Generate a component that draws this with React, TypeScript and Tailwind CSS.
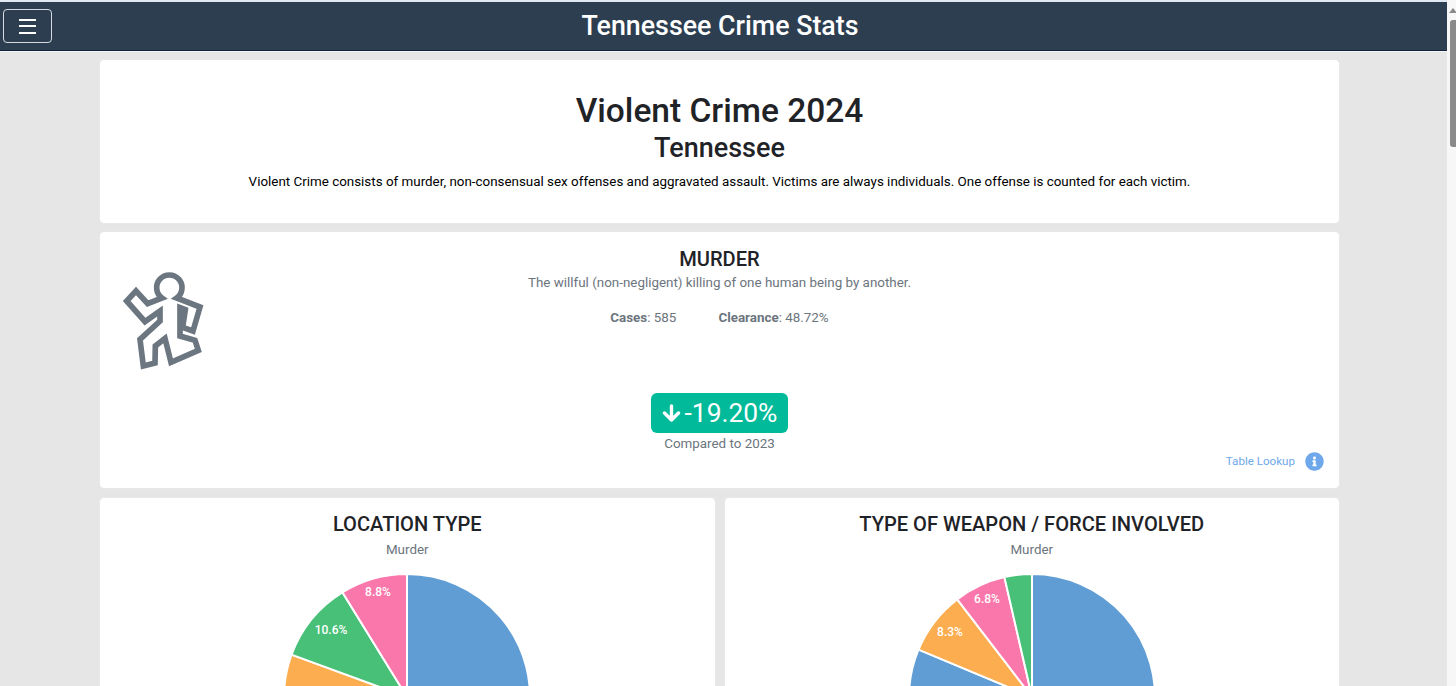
import { FaInfoCircle } from "react-icons/fa";

const BLUE = "#5f9dd4";
const ORANGE = "#fbad50";
const GREEN = "#48c078";
const PINK = "#f977ab";

type Slice = { color: string; pct: number };

const CX = 125;
const CY = 125;
const R = 123;

// Slices run clockwise from 12 o'clock
function slicePath(startPct: number, pct: number) {
  const a0 = (startPct / 100) * Math.PI * 2;
  const a1 = ((startPct + pct) / 100) * Math.PI * 2;
  const x0 = CX + R * Math.sin(a0);
  const y0 = CY - R * Math.cos(a0);
  const x1 = CX + R * Math.sin(a1);
  const y1 = CY - R * Math.cos(a1);
  return `M${CX} ${CY}L${x0} ${y0}A${R} ${R} 0 ${pct > 50 ? 1 : 0} 1 ${x1} ${y1}Z`;
}

function Pie({ slices, labels }: { slices: Slice[]; labels: { x: number; y: number; text: string }[] }) {
  let acc = 0;
  return (
    <svg width="250" height="250" viewBox="0 0 250 250" className="mx-auto mt-[12px] block shrink-0">
      {slices.map((s, i) => {
        const d = slicePath(acc, s.pct);
        acc += s.pct;
        return <path key={i} d={d} fill={s.color} stroke="#fff" strokeWidth="2" />;
      })}
      {labels.map((l) => (
        <text key={l.text} x={l.x} y={l.y} fill="#fff" fontSize="12" fontWeight="500" textAnchor="middle" fontFamily="Roboto, sans-serif">
          {l.text}
        </text>
      ))}
    </svg>
  );
}

const card = "rounded-[5px] border border-[#e8e8e8] bg-white";

export default function App() {
  return (
    <div className="flex h-[686px] overflow-hidden bg-[#e6e6e6] font-['Roboto',sans-serif]">
      <div className="w-[1447px] shrink-0">
        {/* Navbar */}
        <div className="h-[2px] bg-[#dfe8f0]" />
        <header className="grid h-[49px] grid-cols-[1fr_auto_1fr] items-center border-b-[1px] border-[#12263f] bg-[#2c3e50] pr-2 pl-[3px] pt-[1px] shadow-[0_1px_0_#f4f4f4]">
          <button className="mt-[-1px] flex h-[34px] w-[49px] flex-col items-center justify-center gap-[4.5px] rounded-[4px] border border-[#d5dbe0]">
            <span className="h-[2px] w-[17px] bg-white" />
            <span className="h-[2px] w-[17px] bg-white" />
            <span className="h-[2px] w-[17px] bg-white" />
          </button>
          <h1 className="mr-[2px] text-[26.8px] font-medium text-white">Tennessee Crime Stats</h1>
          <div />
        </header>

        <main className="ml-[99px] flex w-[1241px] flex-col gap-[7px] pt-[8px]">
          {/* Heading card */}
          <section className={`${card} flex h-[165px] flex-col items-center pt-[29px] text-[#1f2327]`}>
            <h2 className="text-[33.5px] leading-[43px] font-medium">Violent Crime 2024</h2>
            <h3 className="text-[27px] leading-[32px] font-medium">Tennessee</h3>
            <p className="mt-[7px] text-[13.4px] leading-[21px] text-black">
              Violent Crime consists of murder, non-consensual sex offenses and aggravated assault. Victims are always individuals. One offense is counted for each victim.
            </p>
          </section>

          {/* Murder card */}
          <section className={`${card} relative flex h-[258px] flex-col items-center pt-[15px] text-[#6c757d]`}>
            <svg width="130" height="130" viewBox="0 0 390 390" className="absolute top-[19px] left-0" fill="none" stroke="#6b7680" strokeWidth="17" strokeLinejoin="miter">
              <path d="M186 141 A38 38 0 1 1 230 141 L300 168 L279 240 L248 229 L256 176 L240 170 L240 255 L285 268 L295 298 L213 334 L195 262 L166 285 L165 336 L130 345 L120 265 L180 210 L180 180 L135 212 L80 150 L108 120 L143 158 Z" />
            </svg>
            <h3 className="text-[20.1px] leading-[24px] font-medium text-[#1f2327]">MURDER</h3>
            <p className="mt-[1px] text-[13.4px] leading-[21px]">The willful (non-negligent) killing of one human being by another.</p>
            <div className="mt-[15px] flex gap-[42px] text-[13.4px] leading-[20px]">
              <span><b className="font-bold">Cases</b>: 585</span>
              <span><b className="font-bold">Clearance</b>: 48.72%</span>
            </div>
            <div className="mt-[65px] flex h-[40px] items-center gap-[4px] rounded-[6px] bg-[#00ba99] pr-[11px] pl-[11px] text-[26.4px] text-white">
              <svg width="19" height="18" viewBox="0 0 19 18" fill="none" stroke="#fff" strokeWidth="3.4" strokeLinejoin="round" strokeLinecap="round">
                <path d="M9.5 2V15.5M2.5 9L9.5 16L16.5 9" />
              </svg>
              <span className="pt-[2px]">-19.20%</span>
            </div>
            <p className="mt-[1px] text-[13.4px] leading-[20px]">Compared to 2023</p>
            <div className="absolute right-[15px] bottom-[17px] flex items-center gap-[10px] text-[11.6px] text-[#6ea8ea]">
              <span>Table Lookup</span>
              <FaInfoCircle className="text-[19px]" />
            </div>
          </section>

          {/* Pie charts */}
          <div className="mt-[1px] grid grid-cols-2 gap-2">
            <section className={`${card} flex h-[300px] flex-col items-center pt-[14px] text-[#6c757d]`}>
              <h3 className="text-[20.1px] leading-[24px] font-medium text-[#1f2327]">LOCATION TYPE</h3>
              <p className="mt-[3px] text-[13.4px] leading-[21px]">Murder</p>
              <Pie
                slices={[
                  { color: BLUE, pct: 55 },
                  { color: ORANGE, pct: 25.6 },
                  { color: GREEN, pct: 10.6 },
                  { color: PINK, pct: 8.8 },
                ]}
                labels={[
                  { x: 96, y: 24, text: "8.8%" },
                  { x: 49, y: 62, text: "10.6%" },
                ]}
              />
            </section>
            <section className={`${card} flex h-[300px] flex-col items-center pt-[14px] text-[#6c757d]`}>
              <h3 className="text-[20.1px] leading-[24px] font-medium text-[#1f2327]">TYPE OF WEAPON / FORCE INVOLVED</h3>
              <p className="mt-[3px] text-[13.4px] leading-[21px]">Murder</p>
              <Pie
                slices={[
                  { color: BLUE, pct: 81.3 },
                  { color: ORANGE, pct: 8.3 },
                  { color: PINK, pct: 6.8 },
                  { color: GREEN, pct: 3.6 },
                ]}
                labels={[
                  { x: 43, y: 64, text: "8.3%" },
                  { x: 80, y: 31, text: "6.8%" },
                ]}
              />
            </section>
          </div>
        </main>
      </div>

      {/* Scrollbar */}
      <div className="flex flex-1 flex-col items-end bg-[#f7f7f7] pt-2">
        <div className="mr-[-1px] h-0 w-0 border-x-[4px] border-b-[5px] border-x-transparent border-b-[#8a8a8a]" />
        <div className="mt-[7px] h-[127px] w-[6px] rounded-l-[3px] bg-[#8a8a8a]" />
      </div>
    </div>
  );
}
